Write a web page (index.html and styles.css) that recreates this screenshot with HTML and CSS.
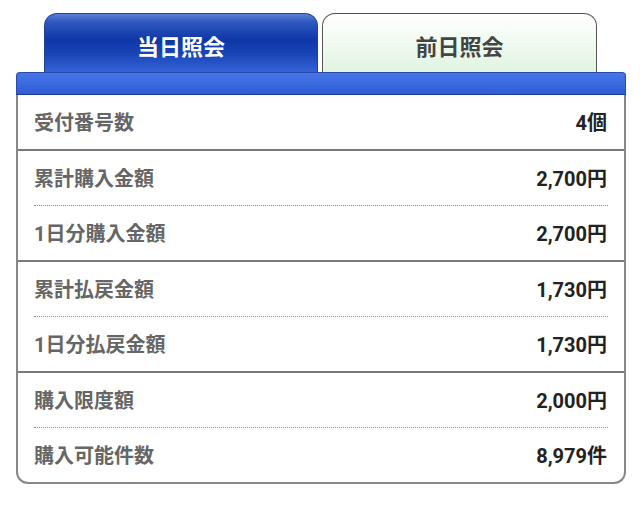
FILE: index.html
```html
<!DOCTYPE html>
<html lang="ja">
<head>
<meta charset="utf-8">
<link rel="stylesheet" href="styles.css">
</head>
<body>
<div class="panel">
  <div class="tabs">
    <div class="tab tab-active">当日照会</div>
    <div class="tab tab-idle">前日照会</div>
  </div>
  <div class="bar"></div>
  <div class="table">
    <div class="group">
      <div class="row"><span class="label">受付番号数</span><span class="value">4個</span></div>
    </div>
    <div class="group">
      <div class="row"><span class="label">累計購入金額</span><span class="value">2,700円</span></div>
      <div class="row"><span class="label">1日分購入金額</span><span class="value">2,700円</span></div>
    </div>
    <div class="group">
      <div class="row"><span class="label">累計払戻金額</span><span class="value">1,730円</span></div>
      <div class="row"><span class="label">1日分払戻金額</span><span class="value">1,730円</span></div>
    </div>
    <div class="group">
      <div class="row"><span class="label">購入限度額</span><span class="value">2,000円</span></div>
      <div class="row"><span class="label">購入可能件数</span><span class="value">8,979件</span></div>
    </div>
  </div>
</div>
</body>
</html>
```

FILE: styles.css
```css
html, body {
  margin: 0;
  padding: 0;
  background: #ffffff;
}
body {
  font-family: Roboto, "Noto Sans CJK JP", sans-serif;
  font-weight: 700;
}
.panel {
  width: 610px;
  margin: 13px 0 0 16px;
}
.tabs {
  display: flex;
  gap: 4px;
  padding-left: 28px;
  height: 59px;
}
.tab {
  box-sizing: border-box;
  width: 275px;
  height: 59px;
  border-radius: 13px 13px 0 0;
  display: flex;
  align-items: center;
  justify-content: center;
  padding-top: 4px;
  font-family: "Noto Sans CJK JP", sans-serif;
  font-size: 22px;
  font-weight: 700;
}
.tab-active {
  width: 274px;
  color: #ffffff;
  border: 1px solid #1f3f98;
  border-bottom: none;
  background: linear-gradient(to bottom, #5a80d6 0%, #2f58c0 14%, #0e36a6 45%, #1a46b8 70%, #3464d8 100%);
}
.tab-idle {
  color: #444444;
  border: 1.5px solid #555555;
  border-bottom: none;
  background: linear-gradient(to bottom, #ffffff 0%, #f3fbf3 40%, #e0f4e0 100%);
}
.bar {
  box-sizing: border-box;
  height: 23px;
  border: 1px solid #2a4aa8;
  border-bottom: 1px solid #1e3c96;
  border-radius: 4px 4px 0 0;
  background: linear-gradient(to bottom, #4676e6 0%, #3a6ae0 50%, #2f5dd6 100%);
}
.table {
  border: 2px solid #888888;
  border-top: none;
  border-radius: 0 0 12px 12px;
}
.group + .group {
  border-top: 2px solid #7a7a7a;
}
.row {
  height: 54px;
  margin: 0 16px;
  padding: 0 1px 2px 0;
  box-sizing: content-box;
  display: flex;
  align-items: center;
  justify-content: space-between;
}
.row {
  height: 52px;
}
.row + .row {
  border-top: 1px dotted #8a8a8a;
}
.label {
  font-size: 20px;
  color: #666666;
}
.value {
  font-size: 20px;
  color: #222222;
}
```
